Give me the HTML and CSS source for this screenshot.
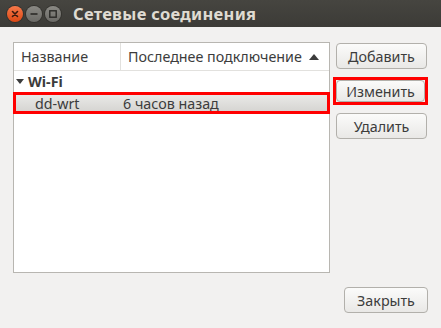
FILE: index.html
```html
<!DOCTYPE html>
<html>
<head>
    <title>Сетевые соединения</title>
    <link rel="stylesheet" href="styles.css">
</head>
<body>
    <div class="titlebar">
        <div class="wbtn close">
            <svg width="16" height="16" viewBox="0 0 16 16"><path d="M5.5 5.5 L10.5 10.5 M10.5 5.5 L5.5 10.5" stroke="#3a1a0f" stroke-width="1.6" stroke-linecap="round"/></svg>
        </div>
        <div class="wbtn">
            <svg width="16" height="16" viewBox="0 0 16 16"><path d="M4.5 8 H11.5" stroke="#2b2a27" stroke-width="1.6"/></svg>
        </div>
        <div class="wbtn">
            <svg width="16" height="16" viewBox="0 0 16 16"><rect x="4.8" y="4.8" width="6.4" height="6.4" fill="none" stroke="#2b2a27" stroke-width="1.4"/></svg>
        </div>
        <span class="title">Сетевые соединения</span>
    </div>

    <div class="content">
        <div class="tree">
            <div class="tree-head">
                <div class="col col-name">Название</div>
                <div class="col col-last">Последнее подключение
                    <svg class="sort" width="10" height="6" viewBox="0 0 10 6"><path d="M0 6 L5 0 L10 6 Z" fill="#3c3c3c"/></svg>
                </div>
            </div>
            <div class="group">
                <svg class="expander" width="8" height="5" viewBox="0 0 8 5"><path d="M0 0 L8 0 L4 5 Z" fill="#3c3c3c"/></svg>
                Wi-Fi
            </div>
            <div class="row selected">
                <div class="cell-name">dd-wrt</div>
                <div class="cell-last">6 часов назад</div>
            </div>
        </div>
        <div class="side">
            <button>Добавить</button>
            <div class="marked"><button>Изменить</button></div>
            <button>Удалить</button>
        </div>
    </div>

    <div class="footer">
        <button class="close-btn">Закрыть</button>
    </div>
</body>
</html>
```

FILE: styles.css
```css
body {
    margin: 0;
    width: 441px;
    height: 328px;
    background: #f2f1f0;
    font-family: "Noto Sans", "DejaVu Sans", sans-serif;
    font-size: 14.3px;
    color: #3c3c3c;
    overflow: hidden;
}

.titlebar {
    height: 27px;
    background: linear-gradient(#464540, #3c3b37);
    display: flex;
    align-items: center;
    padding-left: 7px;
    gap: 3px;
}

.wbtn {
    width: 16px;
    height: 16px;
    border-radius: 50%;
    background: linear-gradient(#8a8984, #6b6a66);
    box-shadow: 0 0 0 1px #33322e;
}

.wbtn.close {
    background: linear-gradient(#f7794a, #dd4814);
}

.wbtn svg {
    display: block;
}

.title {
    margin-left: 9px;
    color: #dfdbd2;
    font-weight: bold;
    font-size: 16.5px;
    letter-spacing: 0.3px;
}

.content {
    display: flex;
    padding: 15px 0 0 13px;
}

.tree {
    width: 315px;
    height: 229px;
    background: #fff;
    border: 1px solid #b8b6b1;
}

.tree-head {
    display: flex;
    height: 27px;
    border-bottom: 1px solid #e2e1de;
}

.col {
    display: flex;
    align-items: center;
    padding-left: 7px;
}

.col-name {
    width: 99px;
    border-right: 1px solid #e2e1de;
}

.col-last {
    flex: 1;
}

.sort {
    margin-left: 7px;
}

.group {
    height: 21px;
    display: flex;
    align-items: center;
    font-weight: bold;
    padding-left: 2px;
}

.expander {
    margin-right: 4px;
}

.row {
    display: flex;
    align-items: center;
    height: 16px;
    border: 3px solid #ff0000;
    margin-left: -1px;
    margin-right: -1px;
    background: linear-gradient(#e9e9e7, #d6d5d2);
}

.cell-name {
    width: 88px;
    padding-left: 19px;
}

.side {
    display: flex;
    flex-direction: column;
    gap: 8px;
    margin-left: 6px;
    margin-top: 1px;
}

button {
    font-family: inherit;
    font-size: 14.3px;
    color: #3c3c3c;
    width: 91px;
    height: 26px;
    border: 1px solid #b2b0ab;
    border-radius: 4px;
    background: linear-gradient(#fbfbfa, #e9e8e6);
    padding: 0;
}

.marked {
    margin-left: -3px;
    width: 89px;
    height: 22px;
    border: 3px solid #ff0000;
}

.marked button {
    width: 89px;
    height: 22px;
    display: block;
}

.footer {
    display: flex;
    justify-content: flex-end;
    padding: 14px 13px 0 0;
}

.close-btn {
    width: 84px;
}
```
